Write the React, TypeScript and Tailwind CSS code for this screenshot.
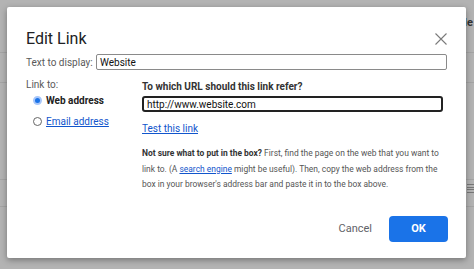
import React from 'react';

export default function App() {
  return (
    <div className="relative w-[474px] h-[269px] overflow-hidden bg-[#b3b3b3] font-['Roboto',_'Liberation_Sans',_sans-serif]">
      {/* --- app behind the overlay --- */}
      <div className="absolute inset-0">
        <div className="absolute left-0 top-[52px] w-full h-px bg-[#a4a4a4]" />
        <div className="absolute left-0 top-[82px] w-full h-px bg-[#a4a4a4]" />
        <div className="absolute left-0 top-[179px] w-full h-px bg-[#a4a4a4]" />
        <div className="absolute left-0 top-[206px] w-full h-px bg-[#a4a4a4]" />
        <div className="absolute left-[464px] top-[15px] text-[11px] font-bold text-[#333]">le</div>
        <div className="absolute left-[467px] top-[184px] w-[7px] h-[9px] flex flex-col justify-between">
          <div className="h-px bg-[#777]" />
          <div className="h-px bg-[#777]" />
          <div className="h-px bg-[#777]" />
          <div className="h-px bg-[#777]" />
        </div>
      </div>

      {/* --- dialog --- */}
      <div className="relative ml-[7px] mt-[7px] w-[459px] h-[251px] bg-white rounded-[2px] shadow-[0_2px_6px_rgba(0,0,0,0.35)] pl-[19px] pr-[18px] pt-[20px] flex flex-col">
        <div className="flex items-center justify-between h-[24px]">
          <span className="text-[16px] text-[#202124] leading-none">Edit Link</span>
          <svg width="12" height="12" viewBox="0 0 12 12" className="mr-[1px]">
            <path d="M0.5 0.5 L11.5 11.5 M11.5 0.5 L0.5 11.5" stroke="#7a7a7a" strokeWidth="1.1" fill="none" />
          </svg>
        </div>

        <div className="flex items-center mt-[3px] h-[16px]">
          <span className="text-[10px] text-[#5a5a5a] w-[70px] shrink-0">Text to display:</span>
          <div className="w-[351px] h-[16px] border border-[#8a8a8a] rounded-[2px] flex items-center pl-[3px] text-[10px] text-[#111]">
            Website
          </div>
        </div>

        <div className="flex mt-[8px]">
          <div className="w-[116px] shrink-0 flex flex-col">
            <span className="text-[10px] text-[#5a5a5a] h-[14px] leading-[14px]">Link to:</span>
            <div className="flex items-center h-[14px] mt-[1px] pl-[7px] gap-[4px]">
              <span className="w-[9px] h-[9px] rounded-full bg-[#1a73e8] border-[2px] border-[#a8c7fa]" />
              <span className="text-[10px] font-bold text-[#222]">Web address</span>
            </div>
            <div className="flex items-center h-[14px] mt-[7px] pl-[7px] gap-[4px]">
              <span className="w-[9px] h-[9px] rounded-full border border-[#666]" />
              <span className="text-[10px] text-[#1155cc] underline">Email address</span>
            </div>
          </div>

          <div className="flex flex-col w-[301px] pt-[2px]">
            <span className="text-[10px] font-bold text-[#333] h-[14px] leading-[14px]">To which URL should this link refer?</span>
            <div className="mt-[2px] h-[16px] border-[2px] border-[#222] rounded-[3px] flex items-center pl-[3px] text-[10px] text-[#111]">
              http://www.website.com
            </div>
            <span className="mt-[10px] text-[10px] text-[#1155cc] underline h-[14px] leading-[14px]">Test this link</span>
            <p className="mt-[10px] text-[8.45px] leading-[15.5px] text-[#555]">
              <b className="text-[#333]">Not sure what to put in the box?</b> First, find the page on the web that you want to link to. (A <span className="text-[#1155cc] underline">search engine</span> might be useful). Then, copy the web address from the box in your browser's address bar and paste it in to the box above.
            </p>
          </div>
        </div>

        <div className="flex-1" />
        <div className="flex items-center justify-end gap-[17px] pb-[16px]">
          <span className="text-[11px] text-[#5f6368]">Cancel</span>
          <div className="w-[59px] h-[26px] rounded-[4px] bg-[#1a73e8] flex items-center justify-center text-[11px] font-bold text-white">
            OK
          </div>
        </div>
      </div>
    </div>
  );
}
